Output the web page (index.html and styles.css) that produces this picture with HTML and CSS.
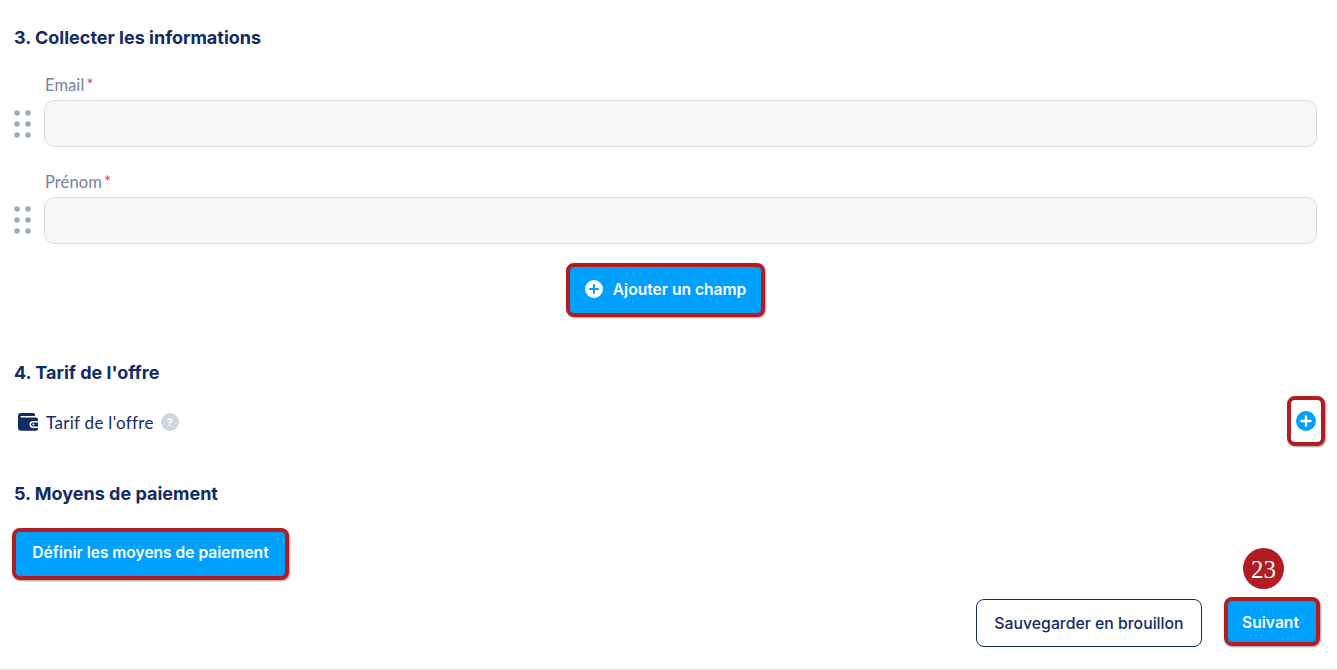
FILE: index.html
```html
<!DOCTYPE html>
<html>
<head>
  <title>Créer une offre</title>
  <link rel="stylesheet" href="styles.css">
</head>
<body>
  <main id="offer-form">
    <h2 class="step-title">3. Collecter les informations</h2>

    <div class="field">
      <label class="field-label">Email<span class="required">*</span></label>
      <div class="field-row">
        <svg class="grip" width="17" height="28" viewBox="0 0 17 28"><g fill="#9dabb9"><circle cx="3" cy="3" r="2.8"/><circle cx="14" cy="3" r="2.8"/><circle cx="3" cy="14" r="2.8"/><circle cx="14" cy="14" r="2.8"/><circle cx="3" cy="25" r="2.8"/><circle cx="14" cy="25" r="2.8"/></g></svg>
        <input class="field-input" type="text">
      </div>
    </div>

    <div class="field">
      <label class="field-label">Prénom<span class="required">*</span></label>
      <div class="field-row">
        <svg class="grip" width="17" height="28" viewBox="0 0 17 28"><g fill="#9dabb9"><circle cx="3" cy="3" r="2.8"/><circle cx="14" cy="3" r="2.8"/><circle cx="3" cy="14" r="2.8"/><circle cx="14" cy="14" r="2.8"/><circle cx="3" cy="25" r="2.8"/><circle cx="14" cy="25" r="2.8"/></g></svg>
        <input class="field-input" type="text">
      </div>
    </div>

    <div class="add-field">
      <button class="btn btn-primary btn-marked btn-add">
        <svg width="18" height="18" viewBox="0 0 18 18"><circle cx="9" cy="9" r="9" fill="#fff"/><path d="M9 5v8M5 9h8" stroke="#00a0ff" stroke-width="2" stroke-linecap="round"/></svg>
        Ajouter un champ
      </button>
    </div>

    <h2 class="step-title step-price">4. Tarif de l'offre</h2>

    <div class="price-row">
      <svg class="wallet" width="20" height="18" viewBox="0 0 20 18"><path d="M3 0h12.5a1.5 1.5 0 0 1 1.5 1.5V3H3.2a.8.8 0 0 0 0 1.6H18a2 2 0 0 1 2 2V8h-5a3.5 3.5 0 0 0 0 7h5v.8a2 2 0 0 1-2 2H3a3 3 0 0 1-3-3V3a3 3 0 0 1 3-3z" fill="#122b64"/><path d="M15 9.6h5v3.8h-5a1.9 1.9 0 0 1 0-3.8z" fill="#122b64"/><circle cx="15.4" cy="11.5" r="1" fill="#fff"/></svg>
      <span class="price-label">Tarif de l'offre</span>
      <span class="help">?</span>
      <button class="btn-icon btn-marked">
        <svg width="20" height="20" viewBox="0 0 20 20"><circle cx="10" cy="10" r="10" fill="#00a0ff"/><path d="M10 5.5v9M5.5 10h9" stroke="#fff" stroke-width="2.4" stroke-linecap="round"/></svg>
      </button>
    </div>

    <h2 class="step-title step-payment">5. Moyens de paiement</h2>

    <button class="btn btn-primary btn-marked btn-payment">Définir les moyens de paiement</button>

    <div class="form-footer">
      <button class="btn btn-outline">Sauvegarder en brouillon</button>
      <div class="next-wrap">
        <span class="step-badge">23</span>
        <button class="btn btn-primary btn-marked btn-next">Suivant</button>
      </div>
    </div>
  </main>
</body>
</html>
```

FILE: styles.css
```css
* {
  box-sizing: border-box;
}

body {
  margin: 0;
  background-color: #fff;
  font-family: "Inter", "Liberation Sans", sans-serif;
}

#offer-form {
  height: 670px;
  padding: 26px 12px 0 14px;
  border-bottom: 1px solid #e4e6eb;
  overflow: hidden;
}

.step-title {
  margin: 0;
  font-size: 18px;
  line-height: 24px;
  font-weight: 700;
  color: #122b64;
}

.step-price {
  margin-top: 44px;
}

.step-payment {
  margin-top: 36px;
}

.field {
  margin: 24px 8px 0 0;
}

.field + .field {
  margin-top: 24px;
}

.field + .field .grip {
  margin-top: -2px;
}

.field-label {
  display: block;
  margin-left: 31px;
  height: 20px;
  font-family: "Lato", sans-serif;
  font-size: 16.5px;
  line-height: 22px;
  letter-spacing: 0.1px;
  color: #75839a;
}

.required {
  margin-left: 2px;
  color: #f5325c;
}

.field-row {
  display: flex;
  align-items: center;
  gap: 13px;
  margin-top: 6px;
}

.grip {
  flex: none;
}

.field-input {
  flex: 1;
  height: 47px;
  border: 1px solid #d9dce4;
  border-radius: 10px;
  background-color: #f6f7f9;
}

.add-field {
  display: flex;
  justify-content: center;
  margin: 19px 8px 0 0;
}

.btn {
  border-radius: 8px;
  font-family: "Inter", "Liberation Sans", sans-serif;
  font-size: 15.6px;
  cursor: pointer;
}

.btn-primary {
  background-color: #00a0ff;
  color: #fff;
  font-weight: 600;
}

.btn-marked {
  border: 4px solid #b11d20;
  box-shadow: 1px 1px 2px rgba(0, 0, 0, 0.4);
}

.btn-add {
  display: flex;
  align-items: center;
  justify-content: center;
  gap: 10px;
  width: 199px;
  height: 54px;
  padding: 0 0 2px;
}

.price-row {
  display: flex;
  align-items: center;
  margin-top: 11px;
  height: 50px;
}

.wallet {
  margin: 1px 0 0 4px;
}

.price-label {
  margin: 3px 0 0 8px;
  font-family: "Lato", sans-serif;
  font-size: 17px;
  letter-spacing: 0.3px;
  color: #122b64;
}

.help {
  width: 18px;
  height: 18px;
  margin: 1px 0 0 7px;
  border-radius: 50%;
  background-color: #cdd6e3;
  color: #fff;
  font-size: 11px;
  font-weight: 700;
  line-height: 18px;
  text-align: center;
}

.btn-icon {
  display: flex;
  align-items: center;
  justify-content: center;
  width: 38px;
  height: 50px;
  margin-left: auto;
  padding: 0;
  border-radius: 8px;
  background-color: #fff;
  cursor: pointer;
}

.btn-payment {
  display: block;
  width: 277px;
  height: 52px;
  margin: 22px 0 0 -2px;
  padding: 0 0 3px;
  font-size: 15.55px;
}

.form-footer {
  display: flex;
  justify-content: flex-end;
  align-items: flex-start;
  gap: 22px;
  margin: 17px 5px 0 0;
}

.btn-outline {
  width: 226px;
  height: 48px;
  margin-top: 2px;
  padding: 0;
  border: 1px solid #122b64;
  background-color: #fff;
  color: #122b64;
  font-size: 15.8px;
  font-weight: 500;
}

.next-wrap {
  position: relative;
}

.btn-next {
  display: block;
  width: 96px;
  height: 49px;
  padding: 2px 3px 0 0;
}

.step-badge {
  position: absolute;
  top: -49px;
  left: 19px;
  width: 41px;
  height: 41px;
  border-radius: 50%;
  background-color: #b11d20;
  color: #fff;
  font-family: "Liberation Serif", serif;
  font-size: 25px;
  line-height: 43px;
  text-align: center;
}
```
